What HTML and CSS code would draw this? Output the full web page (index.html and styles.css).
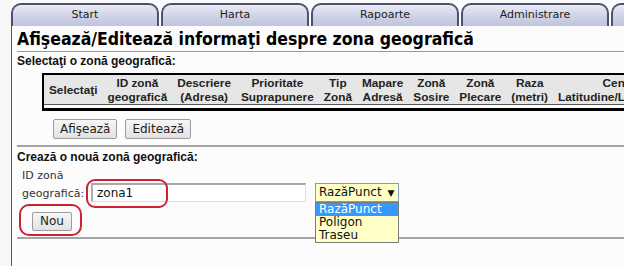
FILE: index.html
```html
<!DOCTYPE html>
<html lang="ro">
<head>
<meta charset="utf-8">
<title>Zona geografică</title>
<link rel="stylesheet" href="styles.css">
</head>
<body>
<div class="page">
  <div class="side"></div>
  <div class="main">
    <nav class="tabs">
      <div class="tab">Start</div>
      <div class="tab">Harta</div>
      <div class="tab">Rapoarte</div>
      <div class="tab">Administrare</div>
      <div class="tab"></div>
    </nav>
    <div class="panel">
      <h1 class="title">Afişează/Editează informaţi despre zona geografică</h1>
      <div class="section-title">Selectaţi o zonă geografică:</div>
      <div class="grid">
        <table>
          <thead>
            <tr>
              <th>Selectaţi</th>
              <th>ID zonă<br>geografică</th>
              <th>Descriere<br>(Adresa)</th>
              <th>Prioritate<br>Suprapunere</th>
              <th>Tip<br>Zonă</th>
              <th>Mapare<br>Adresă</th>
              <th>Zonă<br>Sosire</th>
              <th>Zonă<br>Plecare</th>
              <th>Raza<br>(metri)</th>
              <th>Centru<br>Latitudine/Longitudine</th>
            </tr>
          </thead>
        </table>
      </div>
      <div class="actions">
        <button class="btn">Afişează</button>
        <button class="btn">Editează</button>
      </div>
      <hr class="rule">
      <div class="section-title section-title-new">Crează o nouă zonă geografică:</div>
      <div class="form-row">
        <label class="label">ID zonă geografică:</label>
        <div class="input-wrap">
          <input class="input" type="text" value="zona1">
          <span class="mark mark-input"></span>
        </div>
        <div class="select-wrap">
          <div class="select">RazăPunct <span class="arrow">▼</span></div>
          <ul class="options">
            <li class="option selected">RazăPunct</li>
            <li class="option">Poligon</li>
            <li class="option">Traseu</li>
          </ul>
        </div>
      </div>
      <div class="new-row">
        <button class="btn btn-new">Nou</button>
        <span class="mark mark-new"></span>
      </div>
      <hr class="rule rule-bottom">
    </div>
  </div>
</div>
</body>
</html>
```

FILE: styles.css
```css
html, body {
  margin: 0;
  padding: 0;
  background: #fbfbfb;
}
body {
  width: 624px;
  height: 266px;
  overflow: hidden;
  font-family: "DejaVu Sans", Verdana, sans-serif;
  color: #111;
}
.page {
  display: flex;
  height: 266px;
}
.side {
  width: 11px;
  flex: none;
  background: #f7f7f7;
}
.main {
  flex: 1;
  min-width: 0;
  display: flex;
  flex-direction: column;
  overflow: hidden;
}
.tabs {
  display: flex;
  gap: 2px;
  height: 26px;
  padding-top: 3px;
  box-sizing: border-box;
  flex: none;
}
.tab {
  flex: none;
  width: 148px;
  height: 23px;
  box-sizing: border-box;
  border: 2px solid #4f5070;
  border-bottom: none;
  border-radius: 10px 10px 0 0;
  background: linear-gradient(180deg, #e9ebf3 0%, #d3d6e8 45%, #bfc4de 100%);
  font-size: 11px;
  line-height: 20px;
  text-align: center;
  color: #222;
}
.panel {
  flex: 1;
  border-left: 1px solid #5a5a5a;
  padding-left: 5px;
  background: #fcfcfc;
}
.title {
  margin: 3px 0 0;
  font-family: "DejaVu Sans Condensed", "DejaVu Sans", sans-serif;
  font-weight: bold;
  font-size: 17.5px;
  line-height: 21px;
  padding-bottom: 1px;
  border-bottom: 1px solid #9a9a9a;
  white-space: nowrap;
  color: #000;
}
.section-title {
  font-family: "Liberation Sans", Arial, sans-serif;
  font-weight: bold;
  font-size: 12px;
  line-height: 14px;
  margin-top: 2px;
  color: #111;
}
.section-title-new {
  margin-top: 3px;
}
.grid {
  margin: 5px 0 0 25px;
  border-top: 2px solid #000;
  border-left: 2px solid #000;
  border-bottom: 3px solid #000;
  padding-bottom: 3px;
  background: #fcfcfc;
  width: max-content;
}
table {
  border-collapse: collapse;
  background: #e6e6e6;
}
th {
  font-family: "Liberation Sans", Arial, sans-serif;
  font-weight: bold;
  font-size: 11.8px;
  line-height: 14px;
  padding: 1px 5px 0;
  border-bottom: 1px solid #555;
  white-space: nowrap;
  color: #222;
  text-align: center;
}
.actions {
  display: flex;
  gap: 8px;
  margin: 8px 0 0 36px;
}
.btn {
  font-family: "DejaVu Sans", Verdana, sans-serif;
  font-size: 12px;
  line-height: 14px;
  padding: 2px 6px 2px;
  height: 20px;
  border: 1px solid #9c9c9c;
  border-radius: 2px;
  background: linear-gradient(180deg, #f6f6f6, #e2e2e2);
  color: #222;
}
.rule {
  margin: 6px 0 0;
  border: none;
  border-top: 2px solid #a4a4a4;
  height: 0;
}
.form-row {
  display: flex;
  align-items: flex-end;
  margin-top: 3px;
  padding-left: 5px;
}
.label {
  width: 67px;
  font-size: 11px;
  line-height: 18px;
  color: #333;
  flex: none;
}
.input-wrap {
  position: relative;
  margin-left: 2px;
  flex: none;
}
.input {
  display: block;
  width: 215px;
  height: 19px;
  box-sizing: border-box;
  margin: 0 0 1px;
  padding: 0 4px;
  font-family: "DejaVu Sans", Verdana, sans-serif;
  font-size: 12px;
  color: #111;
  border: 1px solid #e0e0e0;
  border-top: 2px solid #a8a8a8;
  border-left: 2px solid #b0b0b0;
  background: #fff;
  outline: none;
}
.mark {
  position: absolute;
  border: 2px solid #cc2233;
  border-radius: 9px;
  box-sizing: border-box;
  pointer-events: none;
}
.mark-input {
  left: -5px;
  top: -4px;
  width: 82px;
  height: 29px;
}
.select-wrap {
  position: relative;
  margin-left: 9px;
  flex: none;
}
.select {
  width: 84px;
  height: 19px;
  box-sizing: border-box;
  margin-bottom: 1px;
  border: 1px solid #7f9db9;
  background: #ffffc8;
  font-size: 12px;
  line-height: 17px;
  padding-left: 3px;
  color: #111;
  white-space: nowrap;
}
.arrow {
  font-size: 9px;
  margin-left: 2px;
}
.options {
  position: absolute;
  left: 0;
  top: 19px;
  width: 84px;
  box-sizing: border-box;
  margin: 0;
  padding: 0;
  list-style: none;
  border: 1px solid #7a7a7a;
  background: #ffffc8;
  z-index: 2;
}
.option {
  font-size: 12px;
  line-height: 13px;
  height: 13px;
  padding-left: 3px;
  color: #111;
}
.option.selected {
  background: #3399ff;
  color: #fff;
}
.new-row {
  position: relative;
  margin: 7px 0 0 15px;
  height: 19px;
}
.btn-new {
  height: 19px;
  padding: 1px 7px;
}
.mark-new {
  left: -13px;
  top: -6px;
  width: 63px;
  height: 32px;
  border-radius: 10px;
}
.rule-bottom {
  margin-top: 8px;
}
```
